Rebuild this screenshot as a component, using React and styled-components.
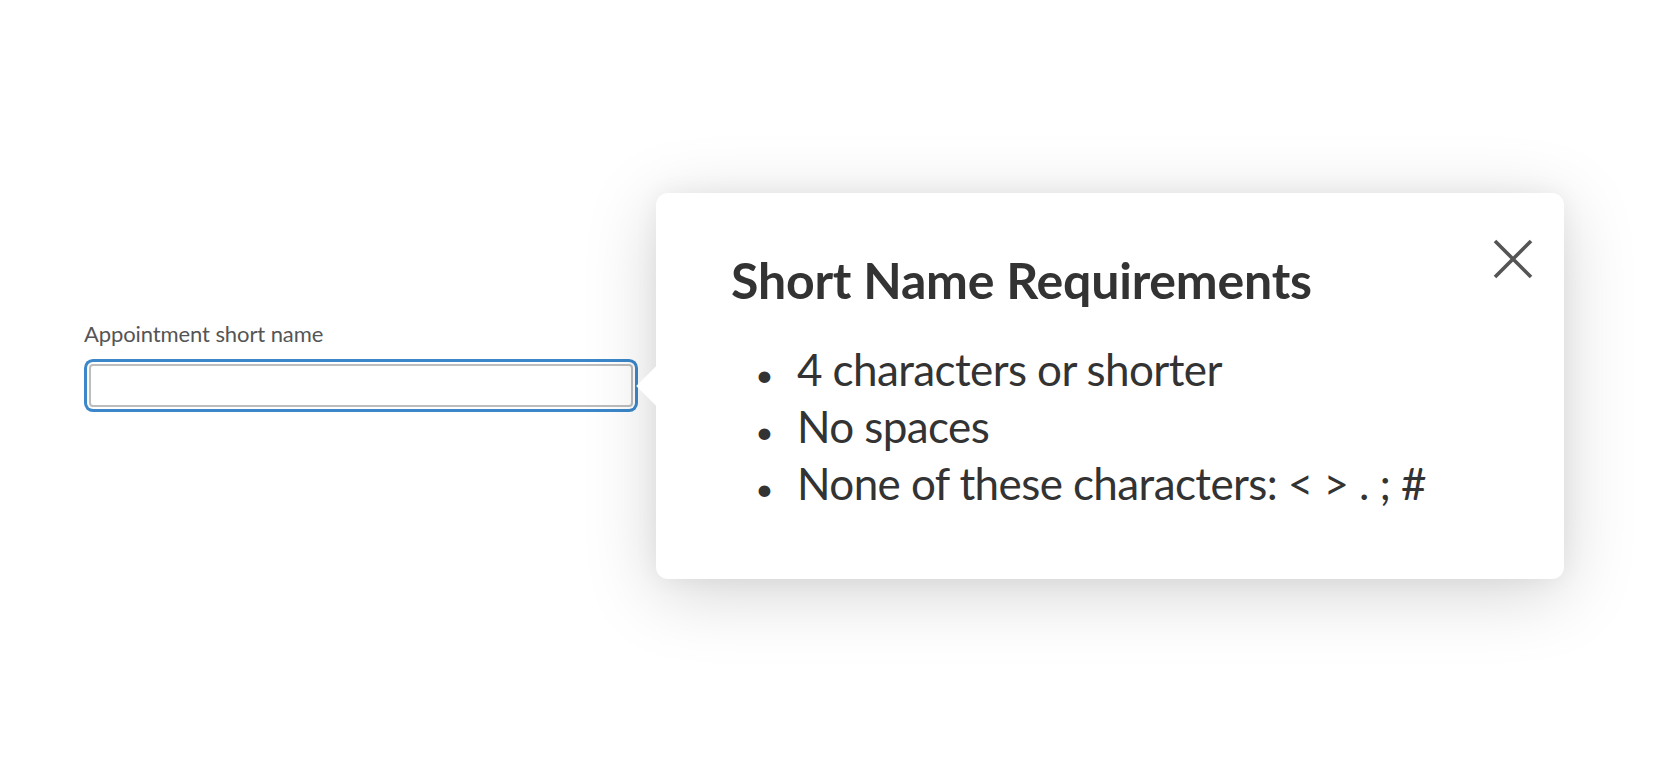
import React from "react";
import styled, { createGlobalStyle } from "styled-components";

const GlobalStyle = createGlobalStyle`
  html, body {
    margin: 0;
    padding: 0;
    background: #ffffff;
  }
  body {
    font-family: Lato, "Noto Sans", "Liberation Sans", sans-serif;
    color: #333;
  }
`;

const Page = styled.div`
  padding: 321px 0 0 84px;
  min-height: 100vh;
  box-sizing: border-box;
`;

const Field = styled.div`
  display: flex;
  flex-direction: column;
  width: 554px;
`;

const Label = styled.label`
  font-size: 22px;
  letter-spacing: -0.1px;
  line-height: 1.2;
  color: #555;
  margin-bottom: 12px;
`;

const InputWrap = styled.div`
  position: relative;
  padding: 5px;
`;

const Input = styled.input`
  display: block;
  width: 100%;
  height: 43px;
  box-sizing: border-box;
  border: 2px solid #bdbdbd;
  border-radius: 4px;
  background: #fff;
  font: inherit;
  font-size: 22px;
  padding: 0 10px;
  outline: none;
  box-shadow: 0 0 0 2px #fff, 0 0 0 5px #3b87c9;
`;

const Popover = styled.div`
  position: absolute;
  left: calc(100% + 18px);
  top: 50%;
  transform: translateY(-50%);
  z-index: 1;
  width: 908px;
  box-sizing: border-box;
  padding: 57px 32px 67px 75px;
  background: #fff;
  border-radius: 12px;
  box-shadow: 0 14px 72px rgba(0, 0, 0, 0.17), 0 0 24px rgba(0, 0, 0, 0.05);

  &::before {
    content: "";
    position: absolute;
    left: -14px;
    top: 50%;
    width: 28px;
    height: 28px;
    margin-top: -14px;
    background: #fff;
    transform: rotate(45deg);
    z-index: -1;
  }
`;

const Header = styled.div`
  display: flex;
  justify-content: space-between;
  align-items: flex-start;
  margin-bottom: 31px;
`;

const Title = styled.h2`
  margin: 0;
  font-size: 50px;
  letter-spacing: -0.2px;
  line-height: 1.2;
  font-weight: 700;
  color: #333;
`;

const CloseButton = styled.button`
  display: flex;
  margin: -11px -1px 0 0;
  padding: 0;
  border: 0;
  background: none;
  cursor: pointer;
`;

const List = styled.ul`
  margin: 0;
  padding-left: 66px;
  list-style: disc;
`;

const Item = styled.li`
  font-size: 44px;
  letter-spacing: -0.6px;
  line-height: 57px;
  color: #333;

  &::marker {
    content: "\\2022\\2002\\2005\\200A";
    font-size: 0.72em;
  }
`;

const rules = [
  "4 characters or shorter",
  "No spaces",
  "None of these characters: < > . ; #",
];

export default function App() {
  return (
    <>
      <GlobalStyle />
      <Page>
        <Field>
          <Label htmlFor="short-name">Appointment short name</Label>
          <InputWrap>
            <Input id="short-name" type="text" />
            <Popover role="dialog">
              <Header>
                <Title>Short Name Requirements</Title>
                <CloseButton aria-label="Close">
                  <svg width="40" height="40" viewBox="0 0 40 40">
                    <path d="M2 2 L38 38 M38 2 L2 38" stroke="#555" strokeWidth="3.6" fill="none" />
                  </svg>
                </CloseButton>
              </Header>
              <List>
                {rules.map((r) => (
                  <Item key={r}>{r}</Item>
                ))}
              </List>
            </Popover>
          </InputWrap>
        </Field>
      </Page>
    </>
  );
}
